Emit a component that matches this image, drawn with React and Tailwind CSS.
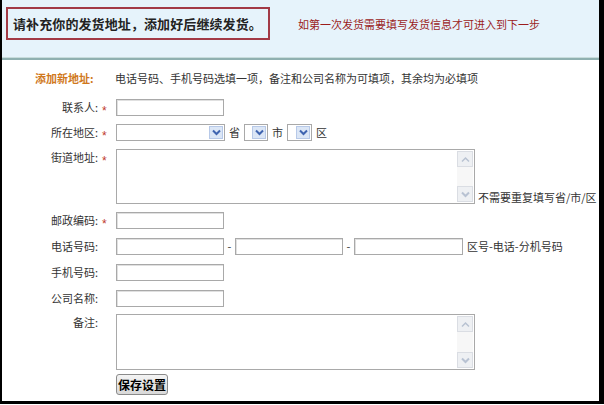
import React from "react";

const font = { fontFamily: '"Noto Sans CJK SC", "Noto Sans", sans-serif' };

function Star() {
  return (
    <span
      style={{ fontFamily: '"Liberation Sans", sans-serif' }}
      className="text-[#c0392b] text-[12px] leading-none block translate-y-[3px]"
    >
      *
    </span>
  );
}

function Input({ w = "w-[108px]" }) {
  return <div className={`${w} h-[17px] border border-[#a9a9a9] bg-white shadow-[inset_1px_1px_0_#e0e0e0]`} />;
}

function Chevron({ dir = "down", color = "#3f64b0" }) {
  return (
    <svg width="9" height="7" viewBox="0 0 9 7">
      {dir === "down" ? (
        <path d="M1 1.5 L4.5 5 L8 1.5" fill="none" stroke={color} strokeWidth="2" />
      ) : (
        <path d="M1 5.5 L4.5 2 L8 5.5" fill="none" stroke={color} strokeWidth="1.5" />
      )}
    </svg>
  );
}

function Select({ w }) {
  return (
    <div className={`${w} h-[17px] border border-[#a9a9a9] bg-white flex justify-end items-stretch p-px`}>
      <div className="w-[14px] bg-[#dbe6f6] border border-[#b7c9e8] flex items-center justify-center">
        <Chevron />
      </div>
    </div>
  );
}

function TextArea({ h }) {
  return (
    <div className={`w-[359px] ${h} border border-[#a9a9a9] bg-white flex justify-end p-px`}>
      <div className="w-[16px] bg-[#f7f7f7] flex flex-col justify-between">
        <div className="h-[16px] bg-[#eef0f3] border border-[#dadde3] flex items-center justify-center">
          <Chevron dir="up" color="#b8c2d2" />
        </div>
        <div className="h-[16px] bg-[#eef0f3] border border-[#dadde3] flex items-center justify-center">
          <Chevron dir="down" color="#b8c2d2" />
        </div>
      </div>
    </div>
  );
}

function Row({ label, star, children, className = "" }) {
  return (
    <div className={`flex items-start ${className}`}>
      <div className="w-[96px] text-right h-[17px] leading-[17px] text-[11px] text-[#333]">{label}</div>
      <div className="w-[18px] pl-[4px] h-[17px] flex items-center">{star && <Star />}</div>
      {children}
    </div>
  );
}

export default function App() {
  return (
    <div style={font} className="w-[604px] h-[404px] bg-white border-l-2 border-r-[5px] border-b-[3px] border-black flex flex-col overflow-hidden">
      <div className="h-[57px] bg-[#e6f3fb] flex items-start pt-[7px] pl-[4px]">
        <div className="w-[264px] h-[33px] border-2 border-[#a23a46] flex items-center pl-[5px] text-[13px] font-bold text-[#222] tracking-[0.1px]">
          请补充你的发货地址，添加好后继续发货。
        </div>
        <div className="ml-[28px] mt-[10px] text-[11px] text-[#9b1c1c] leading-[14px]">
          如第一次发货需要填写发货信息才可进入到下一步
        </div>
      </div>
      <div className="h-[1px] bg-[#c8dcdc]" />
      <div className="h-[2px] bg-[#8fb0b0]" />
      <div className="flex items-center mt-[10px] h-[17px] text-[11px]">
        <div className="w-[96px] pl-[33px] font-bold text-[#d0781c]">添加新地址:</div>
        <div className="pl-[17px] text-[#333]">电话号码、手机号码选填一项，备注和公司名称为可填项，其余均为必填项</div>
      </div>
      <Row label="联系人:" star className="mt-[12px]">
        <Input />
      </Row>
      <Row label="所在地区:" star className="mt-[8px]">
        <div className="flex items-center gap-[4px] text-[11px] text-[#333] h-[17px]">
          <Select w="w-[109px]" />
          <span>省</span>
          <Select w="w-[24px]" />
          <span>市</span>
          <Select w="w-[25px]" />
          <span>区</span>
        </div>
      </Row>
      <Row label="街道地址:" star className="mt-[8px]">
        <div className="flex items-end">
          <TextArea h="h-[55px]" />
          <span className="ml-[3px] text-[11px] text-[#333] leading-[14px]">不需要重复填写省/市/区</span>
        </div>
      </Row>
      <Row label="邮政编码:" star className="mt-[8px]">
        <Input />
      </Row>
      <Row label="电话号码:" className="mt-[9px]">
        <div className="flex items-center text-[11px] text-[#333] h-[17px]">
          <Input />
          <span className="w-[11px] text-center">-</span>
          <Input />
          <span className="w-[11px] text-center">-</span>
          <Input w="w-[109px]" />
          <span className="ml-[4px]">区号-电话-分机号码</span>
        </div>
      </Row>
      <Row label="手机号码:" className="mt-[9px]">
        <Input />
      </Row>
      <Row label="公司名称:" className="mt-[9px]">
        <Input />
      </Row>
      <Row label="备注:" className="mt-[7px]">
        <TextArea h="h-[56px]" />
      </Row>
      <div className="pl-[114px] mt-[4px]">
        <div className="w-[52px] h-[21px] rounded-[3px] border border-[#8a8a8a] bg-gradient-to-b from-[#f4f4f4] to-[#d8d8d8] flex items-center justify-center text-[12px] font-bold text-black">
          保存设置
        </div>
      </div>
    </div>
  );
}
